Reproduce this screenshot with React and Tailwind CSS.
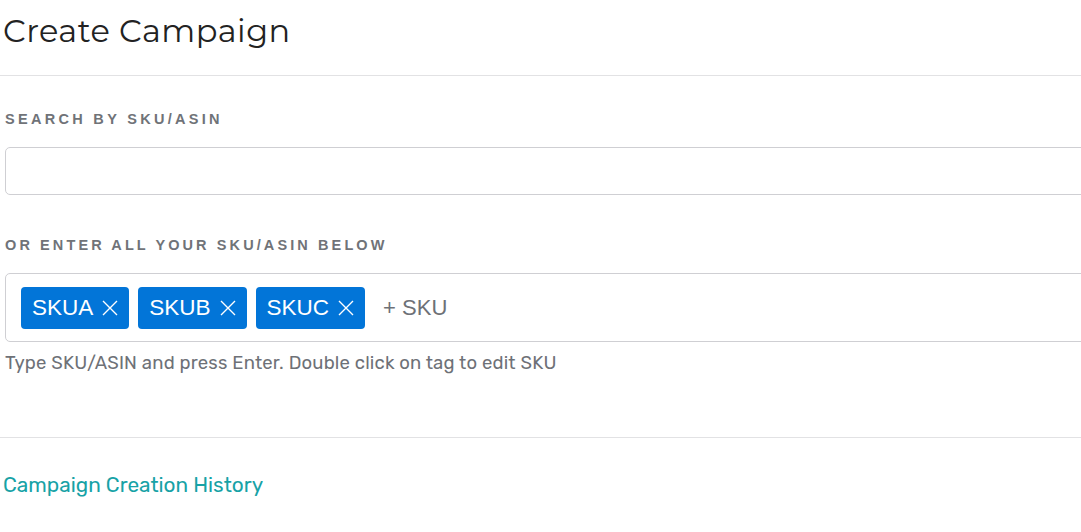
import React from "react";

function Tag({ label }) {
  return (
    <span className="flex h-[42px] items-center gap-[9px] rounded-[4px] bg-[#0275d8] pl-[11px] pr-[11px] text-[22.5px] text-white" style={{ fontFamily: '"Liberation Sans", Arial, sans-serif' }}>
      {label}
      <svg width="16" height="16" viewBox="0 0 16 16" fill="none" stroke="white" strokeWidth="1.4">
        <path d="M1 1L15 15M15 1L1 15" />
      </svg>
    </span>
  );
}

export default function App() {
  return (
    <div className="h-[532px] w-[1081px] overflow-hidden bg-white" style={{ fontFamily: 'Rubik, "Open Sans", sans-serif' }}>
      <div className="border-b border-[#e2e2e4] pb-[22px] pl-[3px] pt-[9px]">
        <h1 className="text-[32px] leading-[44px] text-[#222]" style={{ fontFamily: 'Montserrat, "Open Sans", sans-serif', letterSpacing: "0.45px" }}>
          Create Campaign
        </h1>
      </div>
      <div className="border-b border-[#e2e2e4] pb-[62px] pl-[5px] pt-[33px]">
        <div className="text-[14.5px] font-bold uppercase leading-[20px] tracking-[3.3px] text-[#707378]" style={{ fontFamily: '"Liberation Sans", Arial, sans-serif' }}>
          Search by SKU/ASIN
        </div>
        <div className="mt-[18px] h-[48px] w-[1120px] rounded-[5px] border border-[#cfcfd3]" />
        <div className="mt-[40px] text-[14.5px] font-bold uppercase leading-[20px] tracking-[3.1px] text-[#707378]" style={{ fontFamily: '"Liberation Sans", Arial, sans-serif' }}>
          Or enter all your SKU/ASIN below
        </div>
        <div className="mt-[18px] flex h-[69px] w-[1120px] items-center gap-[9px] rounded-[5px] border border-[#cfcfd3] pl-[15px]">
          <Tag label="SKUA" />
          <Tag label="SKUB" />
          <Tag label="SKUC" />
          <span className="ml-[9px] text-[22px] text-[#6e7177]" style={{ fontFamily: '"Liberation Sans", Arial, sans-serif' }}>+ SKU</span>
        </div>
        <div className="mt-[9px] text-[18.5px] leading-[24px] tracking-[0.18px] text-[#6e7177]">
          Type SKU/ASIN and press Enter. Double click on tag to edit SKU
        </div>
      </div>
      <div className="pl-[3px] pt-[33px] text-[20.8px] leading-[28px] text-[#17a2a6]">
        Campaign Creation History
      </div>
    </div>
  );
}
